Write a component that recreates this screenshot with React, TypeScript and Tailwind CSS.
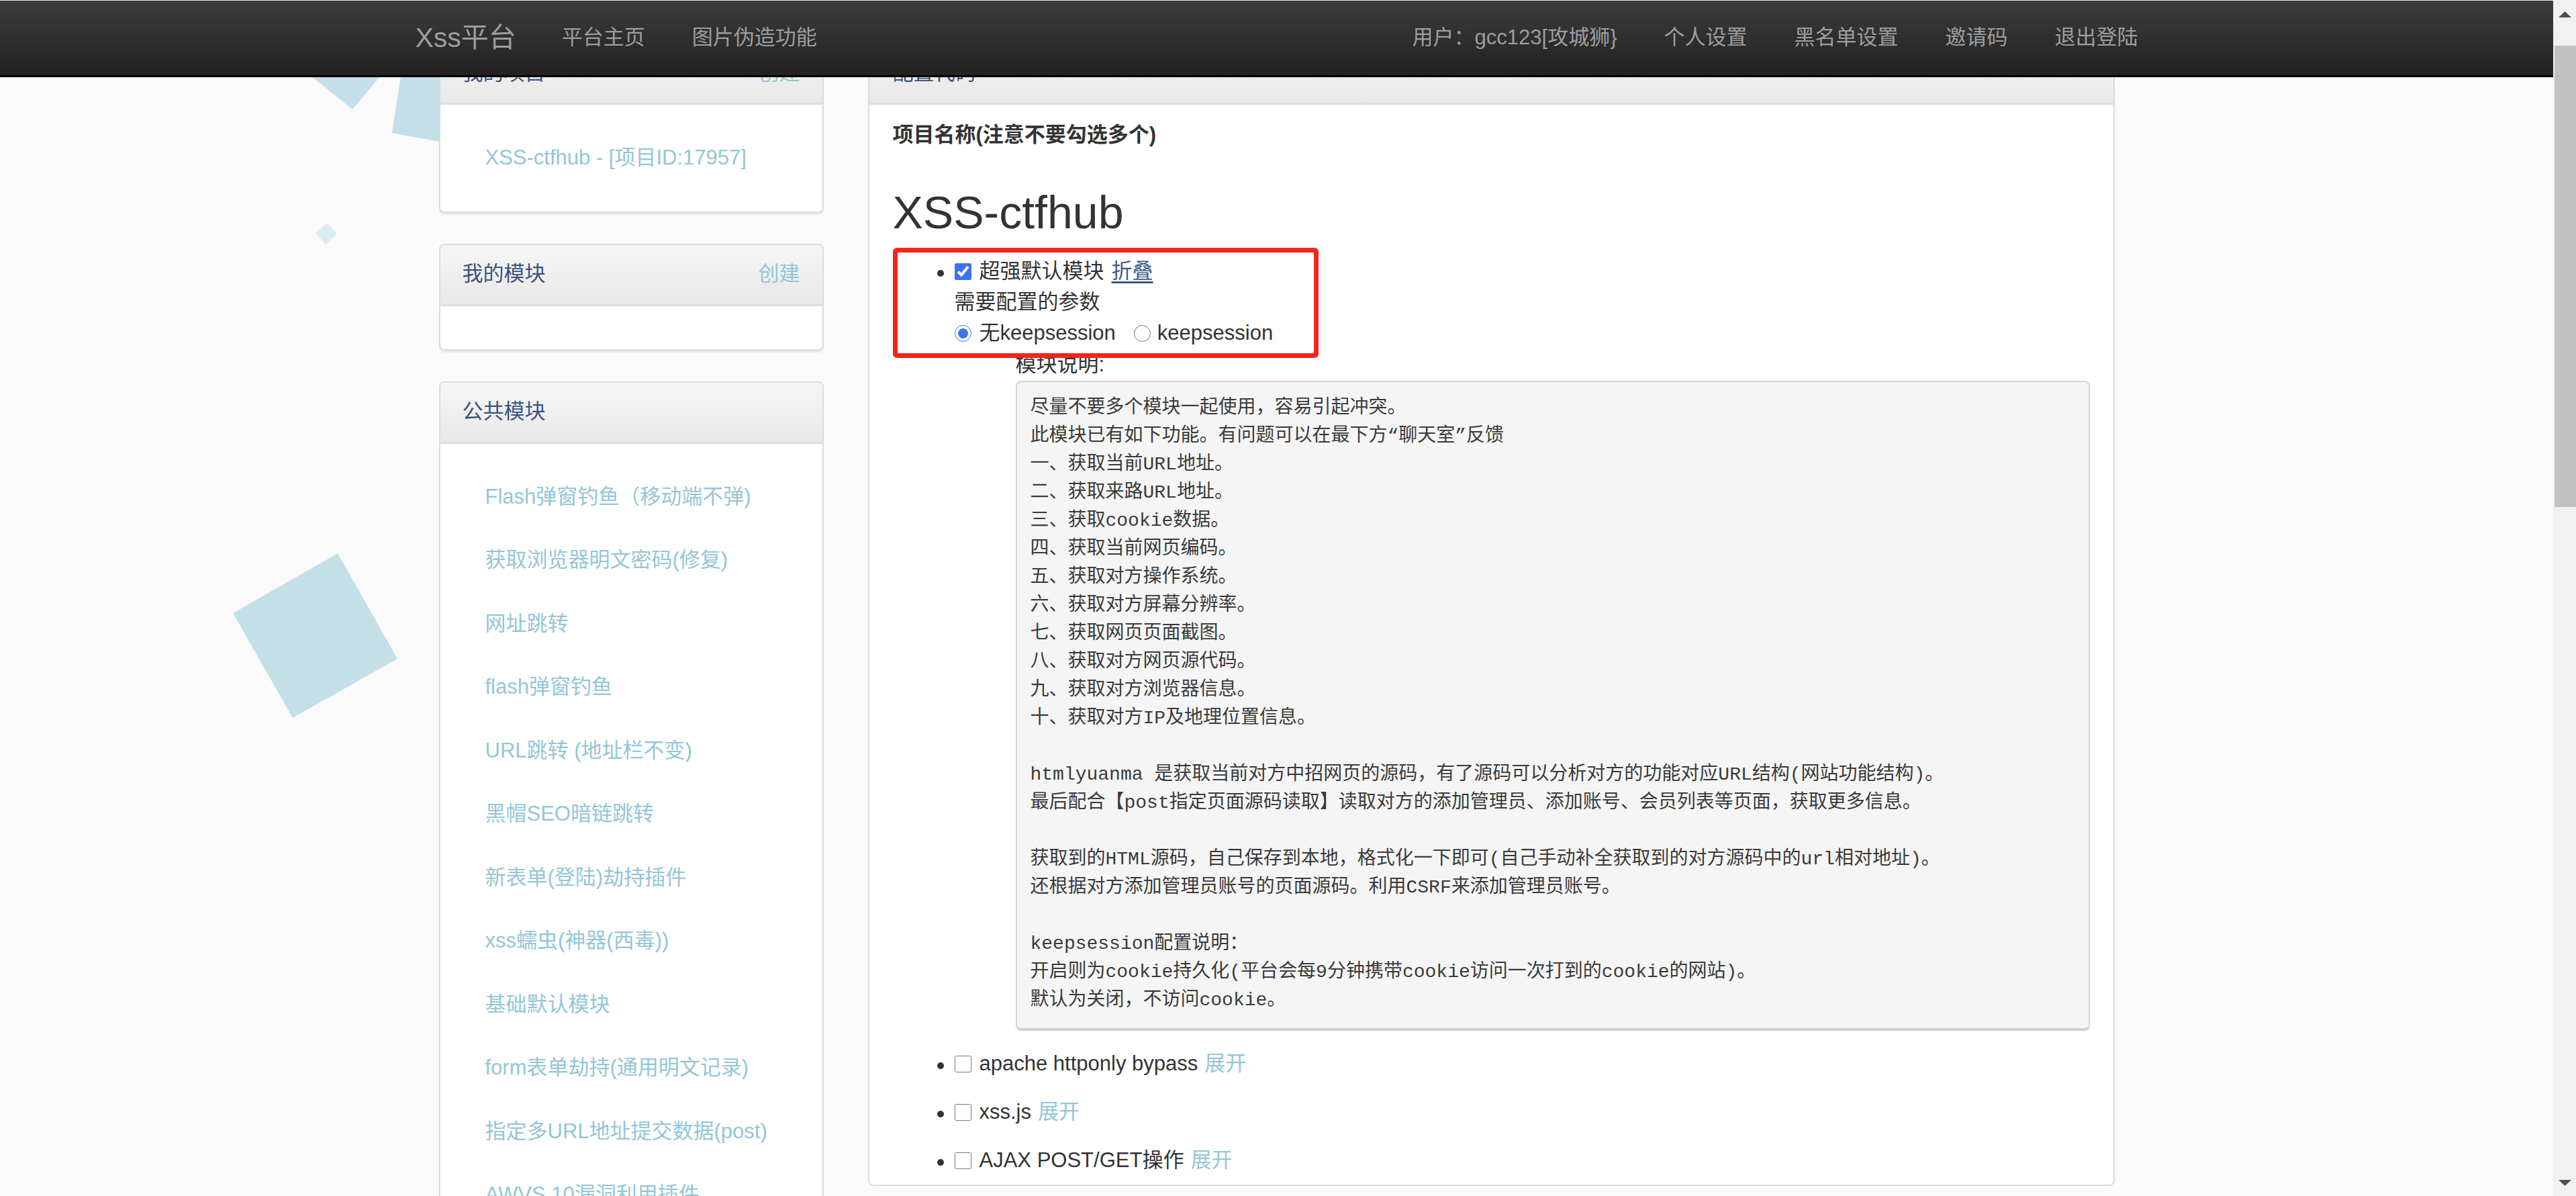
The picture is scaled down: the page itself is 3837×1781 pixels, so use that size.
import React from "react";

const sans = "font-['Liberation_Sans','Noto_Sans_CJK_SC',sans-serif]";
const mono = "font-['Liberation_Mono','Noto_Sans_CJK_SC',monospace]";

const navLeft = ["平台主页", "图片伪造功能"];
const navRight = ["用户：gcc123[攻城狮}", "个人设置", "黑名单设置", "邀请码", "退出登陆"];

const publicModules = [
  "Flash弹窗钓鱼（移动端不弹)",
  "获取浏览器明文密码(修复)",
  "网址跳转",
  "flash弹窗钓鱼",
  "URL跳转 (地址栏不变)",
  "黑帽SEO暗链跳转",
  "新表单(登陆)劫持插件",
  "xss蠕虫(神器(西毒))",
  "基础默认模块",
  "form表单劫持(通用明文记录)",
  "指定多URL地址提交数据(post)",
  "AWVS 10漏洞利用插件",
];

const moduleDesc = [
  "尽量不要多个模块一起使用，容易引起冲突。",
  "此模块已有如下功能。有问题可以在最下方“聊天室”反馈",
  "一、获取当前URL地址。",
  "二、获取来路URL地址。",
  "三、获取cookie数据。",
  "四、获取当前网页编码。",
  "五、获取对方操作系统。",
  "六、获取对方屏幕分辨率。",
  "七、获取网页页面截图。",
  "八、获取对方网页源代码。",
  "九、获取对方浏览器信息。",
  "十、获取对方IP及地理位置信息。",
  "",
  "htmlyuanma 是获取当前对方中招网页的源码，有了源码可以分析对方的功能对应URL结构(网站功能结构)。",
  "最后配合【post指定页面源码读取】读取对方的添加管理员、添加账号、会员列表等页面，获取更多信息。",
  "",
  "获取到的HTML源码，自己保存到本地，格式化一下即可(自己手动补全获取到的对方源码中的url相对地址)。",
  "还根据对方添加管理员账号的页面源码。利用CSRF来添加管理员账号。",
  "",
  "keepsession配置说明：",
  "开启则为cookie持久化(平台会每9分钟携带cookie访问一次打到的cookie的网站)。",
  "默认为关闭，不访问cookie。",
];

const otherModules = ["apache httponly bypass", "xss.js", "AJAX POST/GET操作"];

const Panel = ({
  title,
  action,
  children,
}: {
  title: string;
  action?: string;
  children?: React.ReactNode;
}) => (
  <div className="rounded-[8px] border-2 border-[#dcdcdc] bg-white shadow-[0_3px_2px_rgba(0,0,0,0.07)] overflow-hidden">
    <div className="h-[91px] flex items-center justify-between px-[33px] bg-linear-to-b from-[#f6f6f6] to-[#e8e8e8] border-b-[3px] border-[#dedede]">
      <span className="text-[#3a5580]">{title}</span>
      {action && <span className="text-[#93c6d6]">{action}</span>}
    </div>
    <div className="py-[32px]">{children}</div>
  </div>
);

const Bullet = () => (
  <span className="w-[10px] h-[10px] rounded-full bg-[#333] -ml-[26px] mr-[16px] mt-[6px] shrink-0" />
);

const Arrow = ({ up }: { up?: boolean }) => (
  <svg width="19" height="9" viewBox="0 0 19 9">
    <polygon points={up ? "0,9 9.5,0 19,9" : "0,0 9.5,9 19,0"} fill="#505050" />
  </svg>
);

const App = () => {
  return (
    <div className={`${sans} h-[1781px] w-full overflow-hidden flex bg-[#fafafa] text-[31px] text-[#333]`}>
      <div className="relative flex-1 overflow-hidden">
        {/* background shapes */}
        <svg className="absolute left-0 top-0" width="800" height="1200">
          <polygon points="447,100 578,100 525,163" fill="#c3e0e9" />
          <polygon points="599,100 584,198 660,212 660,100" fill="#c3e0e9" />
          <polygon points="487,332 502,348 485,364 470,347" fill="#d9ecf1" />
          <polygon points="503,824 592,981 436,1069 347,913" fill="#c3e0e9" />
        </svg>

        {/* navbar */}
        <div className="absolute top-0 left-0 right-0 z-10 h-[115px] border-t border-[#e2e2e2] border-b-[3px] border-b-black bg-linear-to-b from-[#3c3c3c] to-[#222]">
          <div className="w-[2566px] mx-auto h-full flex items-center text-[#9d9d9d]">
            <span className="text-[41px] mr-[68px]">Xss平台</span>
            <div className="flex gap-[70px]">
              {navLeft.map((n) => (
                <span key={n}>{n}</span>
              ))}
            </div>
            <div className="ml-auto flex gap-[70px]">
              {navRight.map((n) => (
                <span key={n}>{n}</span>
              ))}
            </div>
          </div>
        </div>

        {/* content */}
        <div className="relative pt-[63px]">
          <div className="w-[2496px] mx-auto flex gap-[66px] items-start">
            <div className="w-[573px] flex flex-col gap-[46px] shrink-0">
              <Panel title="我的项目" action="创建">
                <div className="h-[94.5px] flex items-center pl-[67px] text-[#93c6d6]">
                  XSS-ctfhub - [项目ID:17957]
                </div>
              </Panel>
              <Panel title="我的模块" action="创建" />
              <Panel title="公共模块">
                {publicModules.map((m) => (
                  <div key={m} className="h-[94.5px] flex items-center pl-[67px] text-[#93c6d6]">
                    {m}
                  </div>
                ))}
              </Panel>
            </div>

            <div className="w-[1857px] shrink-0 rounded-[8px] border-2 border-[#dcdcdc] bg-white">
              <div className="h-[91px] flex items-center px-[35px] bg-linear-to-b from-[#f6f6f6] to-[#e8e8e8] border-b-[3px] border-[#dedede]">
                <span className="text-[#3a5580]">配置代码</span>
              </div>
              <div className="relative px-[35px] pt-[23px]">
                <div className="leading-[44px] font-bold">项目名称(注意不要勾选多个)</div>
                <h2 className="mt-[55px] text-[68px] leading-[76px]">XSS-ctfhub</h2>

                <div className="mt-[27px] pl-[92px]">
                  <div className="flex h-[46px] items-center">
                    <Bullet />
                    <input type="checkbox" checked readOnly className="m-0 w-[25px] h-[25px] accent-[#3f73ee]" />
                    <span className="ml-[12px]">超强默认模块</span>
                    <span className="ml-[11px] text-[#3f5a8a] underline underline-offset-[5px]">折叠</span>
                  </div>
                  <div className="flex h-[46px] items-center">需要配置的参数</div>
                  <div className="flex h-[47px] items-center">
                    <input type="radio" name="ks" checked readOnly className="m-0 w-[25px] h-[25px] accent-[#3f73ee]" />
                    <span className="ml-[12px]">无keepsession</span>
                    <input type="radio" name="ks" readOnly className="m-0 ml-[27px] w-[25px] h-[25px]" />
                    <span className="ml-[10px]">keepsession</span>
                  </div>
                  <div className="ml-[91px]">
                    <div className="flex h-[46px] items-center">模块说明:</div>
                    <pre className={`${mono} mt-[1px] text-[28px] leading-[42px] text-[#3a3a3a] bg-[#f5f5f5] border-2 border-[#d4d4d4] border-b-[4px] border-b-[#cfcfcf] rounded-[8px] pl-[20px] pr-[20px] pt-[18px] pb-[20px] whitespace-pre`}>
                      {moduleDesc.map((l, i) => (
                        <div key={i} className="h-[42px]">
                          {l}
                        </div>
                      ))}
                    </pre>
                  </div>
                  <div className="mt-[13px]">
                    {otherModules.map((m) => (
                      <div key={m} className="flex h-[72px] items-center">
                        <Bullet />
                        <input type="checkbox" readOnly className="m-0 w-[25px] h-[25px]" />
                        <span className="ml-[12px]">{m}</span>
                        <span className="ml-[10px] text-[#93c6d6]">展开</span>
                      </div>
                    ))}
                  </div>
                </div>

                {/* annotation */}
                <div className="absolute left-[35px] top-[213px] w-[634px] h-[164px] border-[7px] border-[#f5231b] rounded-[6px]" />
              </div>
            </div>
          </div>
        </div>
      </div>

      {/* scrollbar */}
      <div className="w-[34px] shrink-0 bg-[#f1f1f1] flex flex-col items-center">
        <div className="h-[42px] flex items-center justify-center">
          <Arrow up />
        </div>
        <div className="mt-[26px] ml-[2px] w-[32px] h-[687px] bg-[#c1c1c1]" />
        <div className="mt-auto h-[40px] flex items-center justify-center">
          <Arrow />
        </div>
      </div>
    </div>
  );
};

export default App;
